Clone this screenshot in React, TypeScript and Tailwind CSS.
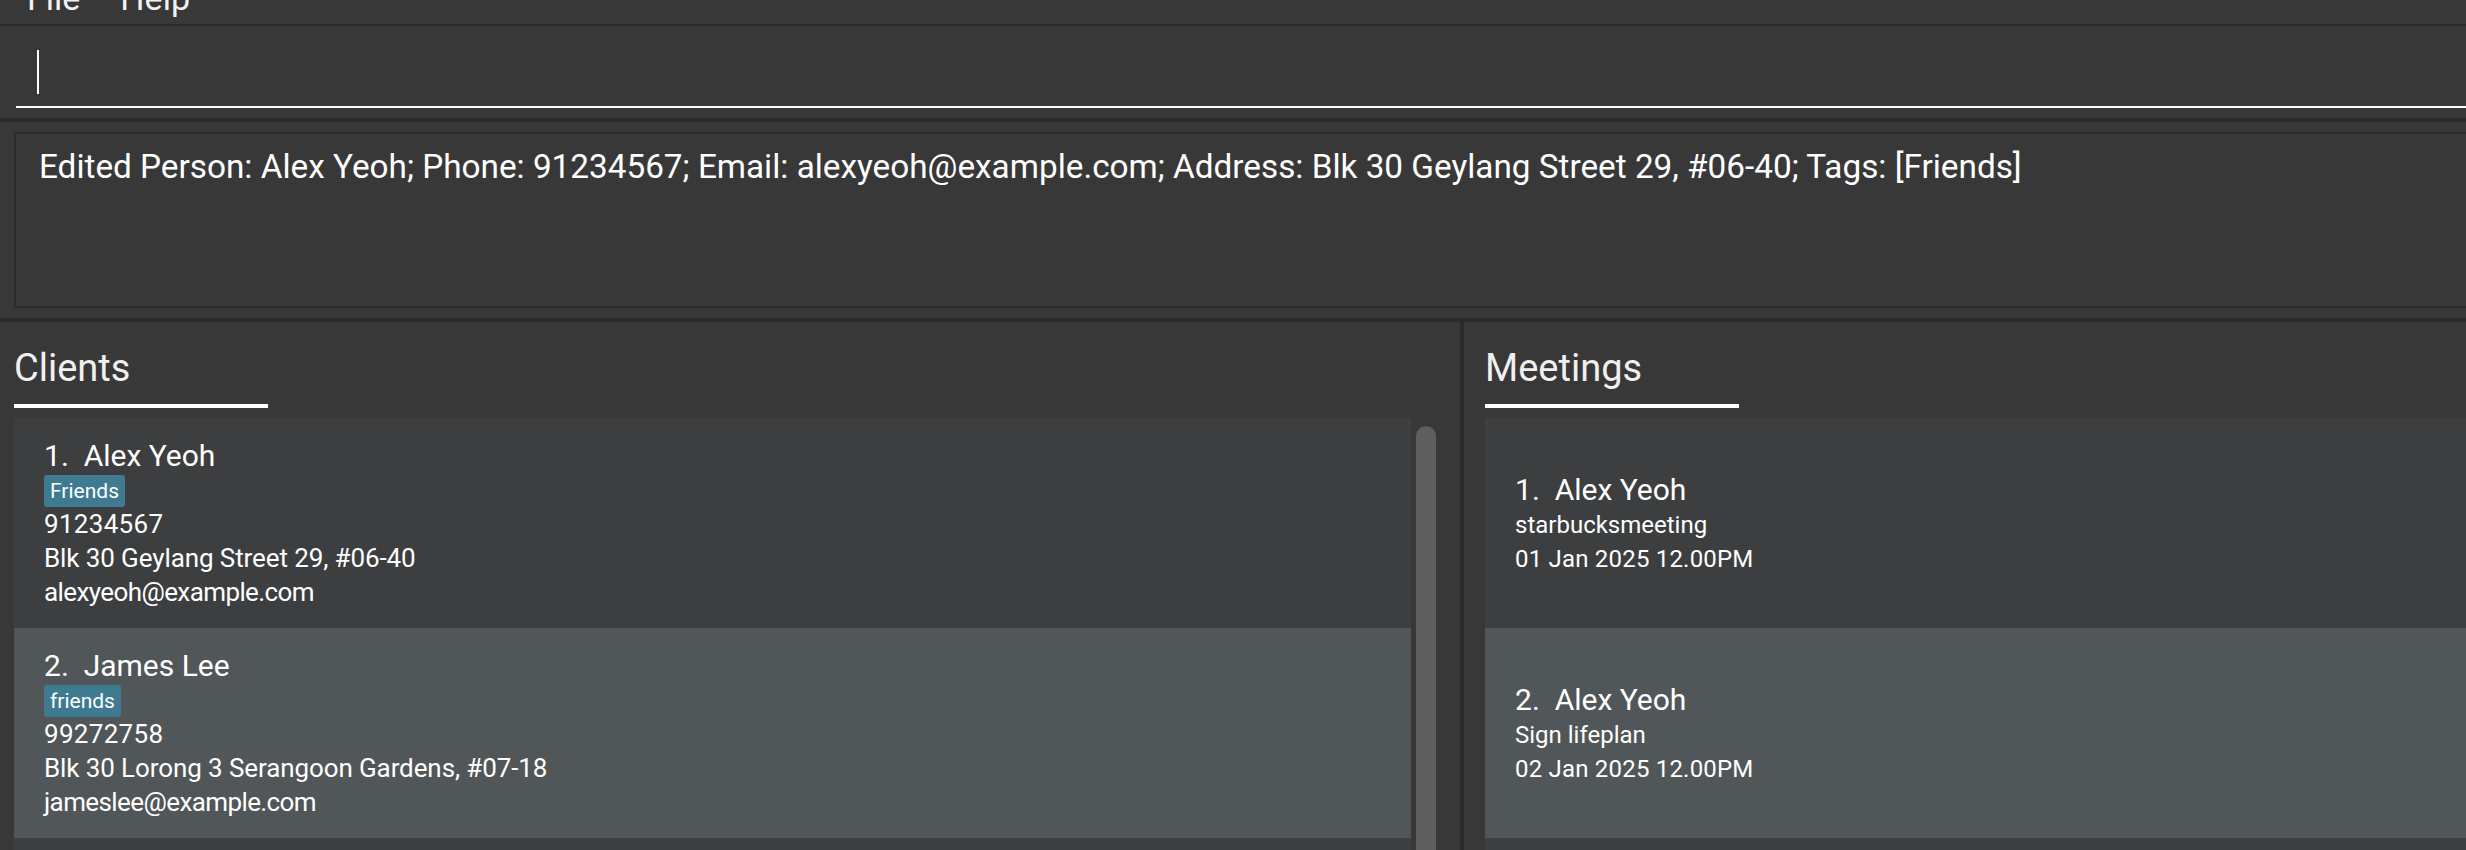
import React from "react";

const clients = [
  {
    idx: 1,
    name: "Alex Yeoh",
    tag: "Friends",
    phone: "91234567",
    address: "Blk 30 Geylang Street 29, #06-40",
    email: "alexyeoh@example.com",
  },
  {
    idx: 2,
    name: "James Lee",
    tag: "friends",
    phone: "99272758",
    address: "Blk 30 Lorong 3 Serangoon Gardens, #07-18",
    email: "jameslee@example.com",
  },
];

const meetings = [
  { idx: 1, name: "Alex Yeoh", desc: "starbucksmeeting", date: "01 Jan 2025 12.00PM" },
  { idx: 2, name: "Alex Yeoh", desc: "Sign lifeplan", date: "02 Jan 2025 12.00PM" },
];

function ClientCard({ c, odd }: { c: (typeof clients)[number]; odd: boolean }) {
  return (
    <div
      className={`h-[210px] shrink-0 pl-[30px] pt-[19px] flex flex-col items-start ${
        odd ? "bg-[#515658]" : "bg-[#3c3e3f]"
      }`}
    >
      <div className="text-[30px] leading-[38px] whitespace-pre">
        {c.idx}.{"  "}
        {c.name}
      </div>
      <div className="h-[32px] flex items-center px-[6px] rounded-[3px] bg-[#3e7b91] text-[21px] leading-[32px]">
        {c.tag}
      </div>
      <div className="text-[26px] leading-[34px] tracking-[0.3px]">{c.phone}</div>
      <div className="text-[26px] leading-[34px] tracking-[-0.1px]">{c.address}</div>
      <div className="text-[26px] leading-[34px] tracking-[-0.6px]">{c.email}</div>
    </div>
  );
}

function MeetingCard({ m, odd }: { m: (typeof meetings)[number]; odd: boolean }) {
  return (
    <div
      className={`h-[210px] shrink-0 pl-[30px] pt-[53px] flex flex-col items-start ${
        odd ? "bg-[#515658]" : "bg-[#3c3e3f]"
      }`}
    >
      <div className="text-[30px] leading-[37px] whitespace-pre">
        {m.idx}.{"  "}
        {m.name}
      </div>
      <div className="text-[24px] leading-[34px]">{m.desc}</div>
      <div className="text-[24px] leading-[34px] tracking-[0.2px]">{m.date}</div>
    </div>
  );
}

function PaneHeader({ title }: { title: string }) {
  return (
    <div className="pt-[22px] shrink-0">
      <div className="text-[38px] leading-[48px] text-[#f0f0f0]">{title}</div>
      <div className="mt-[12px] h-[4px] w-[254px] bg-white" />
      <div className="h-[10px]" />
    </div>
  );
}

export default function App() {
  return (
    <div className="w-[2466px] h-[850px] overflow-hidden bg-[#383838] text-white font-['Roboto','Noto_Sans',sans-serif] flex flex-col">
      {/* Menu bar */}
      <div className="h-[24px] shrink-0 overflow-hidden">
        <div className="-mt-[19px] flex pl-[27px] text-[34px] leading-[34px] text-[#f2f2f2]">
          <span>File</span>
          <span className="ml-[40px]">Help</span>
        </div>
      </div>
      <div className="h-[2px] shrink-0 bg-[#2a2a2a]" />

      {/* Command box */}
      <div className="h-[92px] shrink-0 pl-[16px] pb-[10px] flex flex-col">
        <div className="flex-1 border-b-2 border-white">
          <div className="ml-[21px] mt-[24px] w-[2px] h-[44px] bg-white" />
        </div>
      </div>
      <div className="h-[4px] shrink-0 bg-[#2a2a2a]" />

      {/* Result display */}
      <div className="h-[196px] shrink-0 pt-[10px] pl-[14px] pb-[10px] flex flex-col">
        <div className="flex-1 border-2 border-r-0 border-[#2b2b2b] pl-[23px] pt-[10px]">
          <div className="text-[33.3px] leading-[45px] whitespace-nowrap">
            Edited Person: Alex Yeoh; Phone: 91234567; Email: alexyeoh@example.com; Address: Blk 30 Geylang Street 29, #06-40; Tags: [Friends]
          </div>
        </div>
      </div>
      <div className="h-[4px] shrink-0 bg-[#2a2a2a]" />

      {/* Panes */}
      <div className="flex-1 flex min-h-0">
        <div className="w-[1460px] shrink-0 pl-[14px] flex flex-col min-h-0">
          <PaneHeader title="Clients" />
          <div className="flex-1 flex min-h-0">
            <div className="w-[1397px] shrink-0 flex flex-col overflow-hidden">
              {clients.map((c, i) => (
                <ClientCard key={c.idx} c={c} odd={i % 2 === 1} />
              ))}
              <div className="h-[210px] shrink-0 bg-[#3c3e3f]" />
            </div>
            <div className="w-[30px] shrink-0 pl-[5px] pt-[8px]">
              <div className="w-[20px] h-[600px] rounded-t-[10px] bg-[#5f5f5f]" />
            </div>
          </div>
        </div>
        <div className="w-[4px] shrink-0 bg-[#2a2a2a]" />
        <div className="flex-1 pl-[21px] flex flex-col min-h-0">
          <PaneHeader title="Meetings" />
          <div className="flex-1 flex flex-col overflow-hidden">
            {meetings.map((m, i) => (
              <MeetingCard key={m.idx} m={m} odd={i % 2 === 1} />
            ))}
            <div className="h-[210px] shrink-0 bg-[#3c3e3f]" />
          </div>
        </div>
      </div>
    </div>
  );
}
